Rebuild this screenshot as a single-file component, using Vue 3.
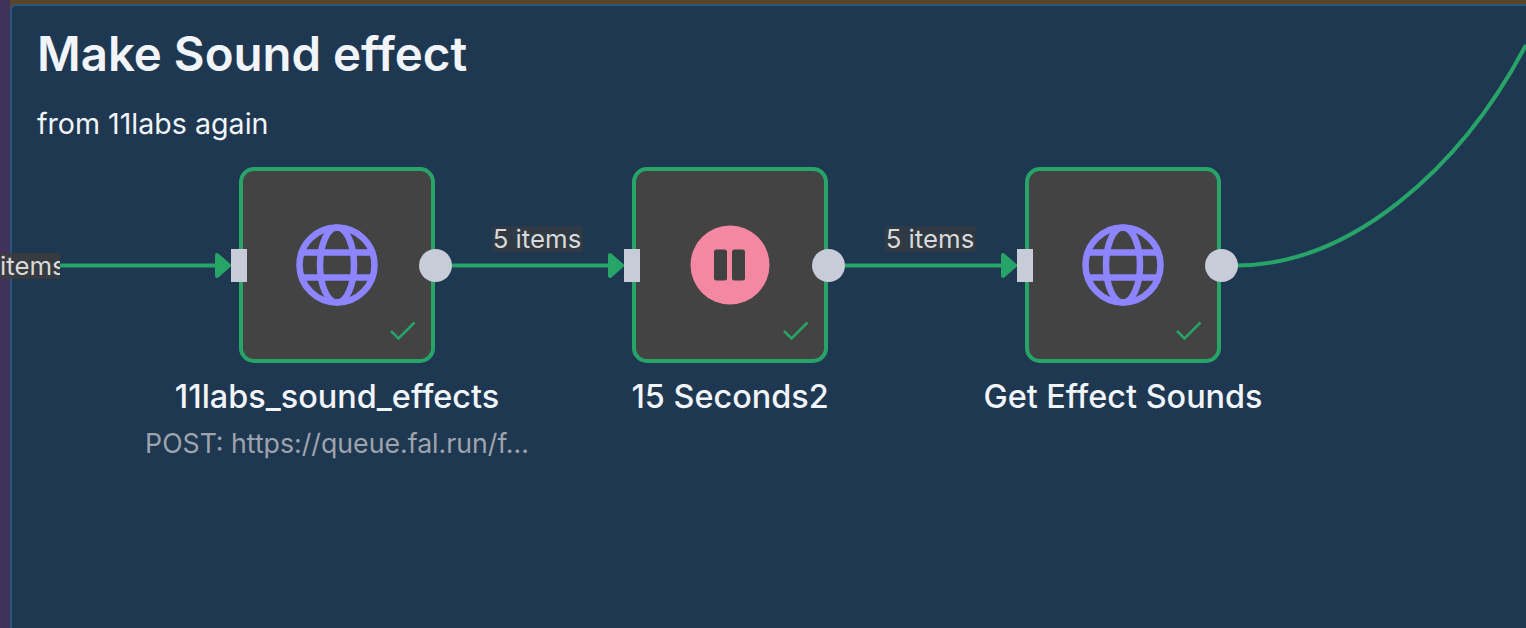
<script setup>
const nodes = [
  { id: 1, x: 239, icon: 'globe', name: '11labs_sound_effects', sub: 'POST: https://queue.fal.run/f...' },
  { id: 2, x: 632, icon: 'pause', name: '15 Seconds2' },
  { id: 3, x: 1025, icon: 'globe', name: 'Get Effect Sounds' },
]
const edges = [
  { id: 1, d: 'M60 265.5H218', tip: 217 },
  { id: 2, d: 'M452 265.5H610', tip: 610 },
  { id: 3, d: 'M845 265.5H1003', tip: 1003 },
]
const labels = [
  { id: 1, x: 537, text: '5 items' },
  { id: 2, x: 930, text: '5 items' },
]
</script>

<template>
  <div class="page">
    <div class="frame">
      <div class="sticky">
        <h1 class="title">Make Sound effect</h1>
        <p class="note">from 11labs again</p>

        <svg class="wires" width="1526" height="628" viewBox="0 0 1526 628" fill="none">
          <path v-for="e in edges" :key="e.id" :d="e.d" stroke="#27a468" stroke-width="4" />
          <path
            v-for="e in edges"
            :key="'t' + e.id"
            :d="`M${e.tip} 255 L${e.tip + 12} 265.5 L${e.tip} 276 Z`"
            fill="#27a468"
            stroke="#27a468"
            stroke-width="4"
            stroke-linejoin="round"
          />
          <path d="M1236 265.5C1350 265.500 1460 170 1526 45" stroke="#27a468" stroke-width="4" />
        </svg>

        <span class="edge-label cut">items</span>
        <span v-for="l in labels" :key="l.id" class="edge-label" :style="{ left: l.x + 'px' }">{{ l.text }}</span>

        <div v-for="n in nodes" :key="n.id" class="node" :style="{ left: n.x + 'px' }">
          <div class="box">
            <svg v-if="n.icon === 'globe'" class="icon" width="84" height="84" viewBox="0 0 84 84" fill="none" stroke="#8c85ff" stroke-width="6.5">
              <circle cx="42" cy="42" r="37.5" />
              <ellipse cx="42" cy="42" rx="17" ry="37.5" />
              <path d="M6 29.5H78M6 54.5H78" />
            </svg>
            <svg v-else class="icon" width="84" height="84" viewBox="0 0 84 84">
              <circle cx="42" cy="42" r="39.5" fill="#f487a2" />
              <rect x="26" y="26.500" width="13" height="31" rx="2.500" fill="#414141" />
              <rect x="44" y="26.500" width="13" height="31" rx="2.500" fill="#414141" />
            </svg>
            <svg class="check" width="28" height="22" viewBox="0 0 28 22" fill="none" stroke="#27a468" stroke-width="2.500">
              <path d="M2 11L9.500 18.500L25.500 2.500" />
            </svg>
          </div>
          <span class="port-in"></span>
          <span class="port-out"></span>
          <div class="name">{{ n.name }}</div>
          <div v-if="n.sub" class="sub">{{ n.sub }}</div>
        </div>
      </div>
    </div>
  </div>
</template>

<style scoped>
.page {
  width: 1526px;
  height: 628px;
  background: #41325b;
  overflow: hidden;
  padding-left: 10px;
  box-sizing: border-box;
  font-family: Inter, "Liberation Sans", sans-serif;
}
.frame {
  height: 100%;
  background: #5a4526;
  padding-top: 4px;
  box-sizing: border-box;
}
.sticky {
  position: relative;
  height: 100%;
  background: #1f3851;
  border-left: 2px solid #2b5580;
  border-top: 2px solid #2b5580;
  border-top-left-radius: 6px;
  box-sizing: border-box;
  padding: 20px 0 0 25px;
}
.title {
  margin: 0;
  font-size: 47.4px;
  line-height: 56px;
  font-weight: 600;
  color: #f1f4f9;
}
.note {
  margin: 25px 0 0;
  font-size: 28.6px;
  line-height: 34px;
  font-weight: 400;
  color: #f1f4f9;
}
.wires {
  position: absolute;
  left: -12px;
  top: -6px;
}
.edge-label {
  position: absolute;
  top: 220px;
  transform: translateX(-12px) translateX(-50%);
  padding: 0 1px;
  height: 26px;
  line-height: 25px;
  font-size: 25.8px;
  color: #d9d9d9;
  background: rgba(60, 60, 60, 0.55);
  white-space: nowrap;
}
.edge-label.cut {
  left: -12px;
  top: 247px;
  transform: none;
  width: 60px;
  padding: 0;
  text-align: right;
  overflow: hidden;
  background: rgba(60, 60, 60, 0.8);
}
.node {
  position: absolute;
  top: 161px;
  margin-left: -12px;
  width: 196px;
}
.box {
  position: relative;
  width: 196px;
  height: 196px;
  box-sizing: border-box;
  background: #434343;
  border: 4px solid #27a468;
  border-radius: 15px;
  display: flex;
  align-items: center;
  justify-content: center;
}
.check {
  position: absolute;
  left: 146px;
  top: 149px;
}
.port-in {
  position: absolute;
  left: -8px;
  top: 82px;
  width: 16px;
  height: 33px;
  background: #c8ccd9;
}
.port-out {
  position: absolute;
  left: 179.5px;
  top: 82px;
  width: 33px;
  height: 33px;
  border-radius: 50%;
  background: #c8ccd9;
}
.name {
  position: absolute;
  top: 211px;
  left: 50%;
  transform: translateX(-50%);
  font-size: 32.4px;
  line-height: 38px;
  font-weight: 500;
  color: #f1f4f9;
  white-space: nowrap;
}
.sub {
  position: absolute;
  top: 260px;
  left: 50%;
  transform: translateX(-50%);
  font-size: 26.7px;
  line-height: 32px;
  color: #9ea3ad;
  white-space: nowrap;
}
</style>
